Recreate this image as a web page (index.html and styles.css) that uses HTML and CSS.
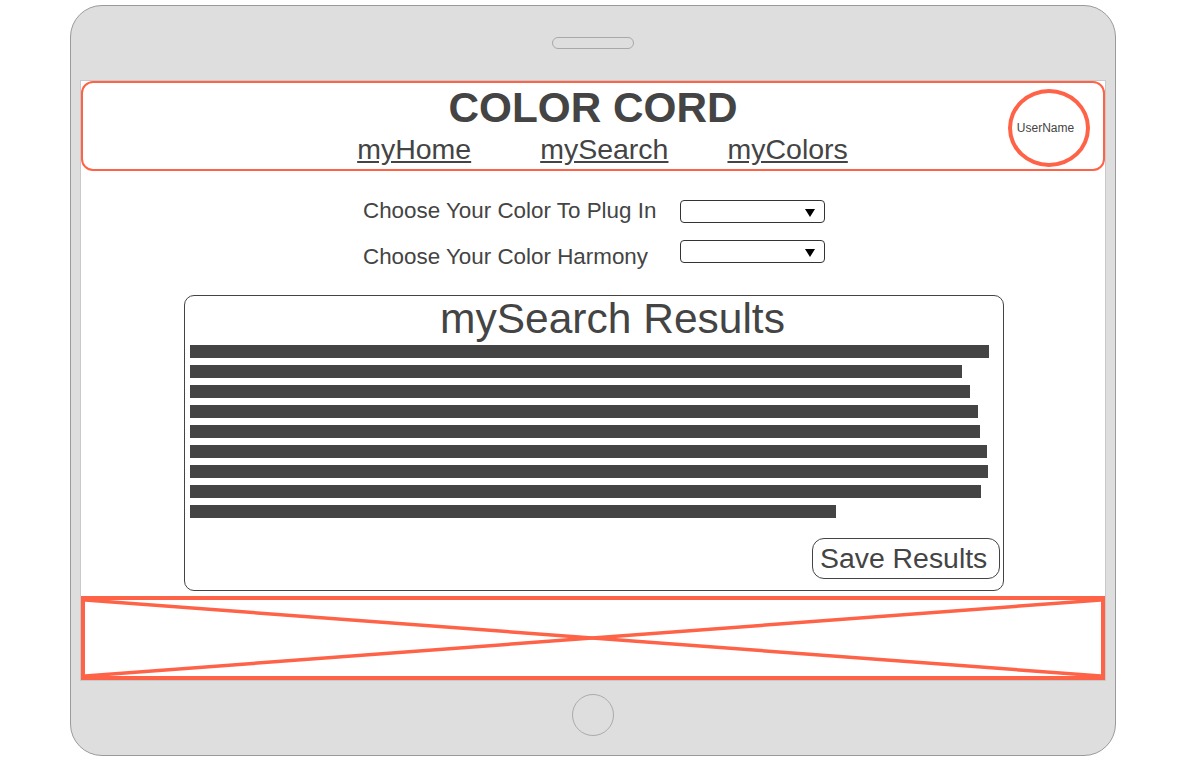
FILE: index.html
```html
<!DOCTYPE html>
<html lang="en">
<head>
<meta charset="utf-8">
<title>Color Cord - mySearch</title>
<link rel="stylesheet" href="styles.css">
</head>
<body>
<div class="tablet">
  <div class="bezel-top"><div class="speaker"></div></div>
  <div class="screen">
    <header class="header">
      <h1 class="title">COLOR CORD</h1>
      <nav class="nav">
        <a class="nav-link nav-home" href="#">myHome</a>
        <a class="nav-link nav-search" href="#">mySearch</a>
        <a class="nav-link" href="#">myColors</a>
      </nav>
      <div class="avatar">UserName</div>
    </header>

    <div class="form">
      <div class="form-row">
        <span class="form-label form-label-first">Choose Your Color To Plug In</span>
        <div class="select select-first"><svg class="arrow" width="10" height="8" viewBox="0 0 10 8"><polygon points="0,0 10,0 5,8" fill="#000"/></svg></div>
      </div>
      <div class="form-row form-row-second">
        <span class="form-label form-label-low">Choose Your Color Harmony</span>
        <div class="select"><svg class="arrow" width="10" height="8" viewBox="0 0 10 8"><polygon points="0,0 10,0 5,8" fill="#000"/></svg></div>
      </div>
    </div>

    <section class="results">
      <h2 class="results-title">mySearch Results</h2>
      <div class="bars">
        <div class="bar" style="width:799px"></div>
        <div class="bar" style="width:772px"></div>
        <div class="bar" style="width:780px"></div>
        <div class="bar" style="width:788px"></div>
        <div class="bar" style="width:790px"></div>
        <div class="bar" style="width:797px"></div>
        <div class="bar" style="width:798px"></div>
        <div class="bar" style="width:791px"></div>
        <div class="bar" style="width:646px"></div>
      </div>
      <button class="save-btn" type="button">Save Results</button>
    </section>

    <div class="placeholder">
      <svg class="placeholder-x" viewBox="0 0 1016 76" preserveAspectRatio="none">
        <line x1="0" y1="0" x2="1016" y2="76"/>
        <line x1="0" y1="76" x2="1016" y2="0"/>
      </svg>
    </div>
  </div>
  <div class="bezel-bottom"><div class="home-btn"></div></div>
</div>
</body>
</html>
```

FILE: styles.css
```css
* { box-sizing: border-box; }

html, body {
  margin: 0;
  padding: 0;
  background: #ffffff;
}

body {
  font-family: "Liberation Sans", Arial, sans-serif;
  color: #444444;
}

.tablet {
  margin: 5px 0 0 70px;
  width: 1046px;
  height: 751px;
  border: 1px solid #9a9a9a;
  border-radius: 32px;
  background: #dedede;
  padding: 0 9px;
  display: flex;
  flex-direction: column;
}

.bezel-top {
  height: 74px;
  display: flex;
  align-items: flex-start;
  justify-content: center;
  padding-top: 31px;
}

.speaker {
  width: 82px;
  height: 12px;
  border: 1px solid #a8a8a8;
  border-radius: 6px;
  background: #dedede;
}

.screen {
  height: 601px;
  border: 1px solid #c9c9c9;
  background: #ffffff;
  display: flex;
  flex-direction: column;
}

.bezel-bottom {
  flex: 1;
  display: flex;
  justify-content: center;
  align-items: flex-start;
  padding-top: 13px;
}

.home-btn {
  width: 42px;
  height: 42px;
  border: 1px solid #ababab;
  border-radius: 50%;
}

/* Header */
.header {
  position: relative;
  height: 90px;
  border: 2px solid #ff6347;
  border-radius: 12px;
  display: flex;
  flex-direction: column;
  align-items: center;
  padding-top: 2px;
}

.title {
  margin: 0;
  font-size: 42.3px;
  line-height: 46px;
  font-weight: bold;
  color: #444444;
}

.nav {
  display: flex;
  padding-left: 19px;
  margin-top: 2px;
}

.nav-link {
  font-size: 28.5px;
  line-height: 32px;
  color: #444444;
  text-decoration: underline;
}

.nav-home { margin-right: 69px; }
.nav-search { margin-right: 59px; }

.avatar {
  position: absolute;
  left: 925px;
  top: 6px;
  width: 82px;
  height: 78px;
  border: 4px solid #ff6347;
  border-radius: 50%;
  display: flex;
  align-items: center;
  justify-content: center;
  padding-right: 7px;
  font-size: 12px;
  color: #444444;
}

/* Form */
.form {
  margin-top: 26px;
  display: flex;
  flex-direction: column;
  align-items: center;
  padding-left: 2px;
}

.form-row {
  display: flex;
  align-items: flex-start;
}

.form-row-second {
  margin-top: 16px;
}

.form-label {
  width: 317px;
  font-size: 22.4px;
  line-height: 26px;
  color: #444444;
}

.form-label-first {
  margin-top: 1px;
}

.form-label-low {
  margin-top: 4px;
}

.select {
  width: 145px;
  height: 23px;
  border: 1px solid #333333;
  border-radius: 4px;
  background: #ffffff;
  display: flex;
  align-items: center;
  justify-content: flex-end;
  padding: 3px 9px 0 0;
}

.select-first {
  margin-top: 3px;
}

.arrow { display: block; }

/* Results */
.results {
  margin: 25px 101px 0 103px;
  height: 296px;
  border: 1px solid #444444;
  border-radius: 10px;
  padding: 0 0 0 5px;
  display: flex;
  flex-direction: column;
}

.results-title {
  margin: 0 0 4px 0;
  font-size: 42.5px;
  line-height: 45px;
  font-weight: normal;
  text-align: center;
  padding-left: 32px;
  color: #444444;
}

.bars {
  display: flex;
  flex-direction: column;
  gap: 7px;
}

.bar {
  height: 13px;
  background: #444444;
}

.save-btn {
  margin: auto 3px 11px 0;
  align-self: flex-end;
  width: 188px;
  height: 41px;
  border: 1px solid #444444;
  border-radius: 12px;
  background: #ffffff;
  font-family: "Liberation Sans", Arial, sans-serif;
  font-size: 28.4px;
  line-height: 39px;
  color: #444444;
  text-align: left;
  padding: 0 0 0 7px;
}

/* Bottom placeholder */
.placeholder {
  margin-top: 5px;
  height: 84px;
  border: 4px solid #ff6347;
  position: relative;
}

.placeholder-x {
  display: block;
  width: 100%;
  height: 100%;
}

.placeholder-x line {
  stroke: #ff6347;
  stroke-width: 3.5;
  vector-effect: non-scaling-stroke;
}
```
